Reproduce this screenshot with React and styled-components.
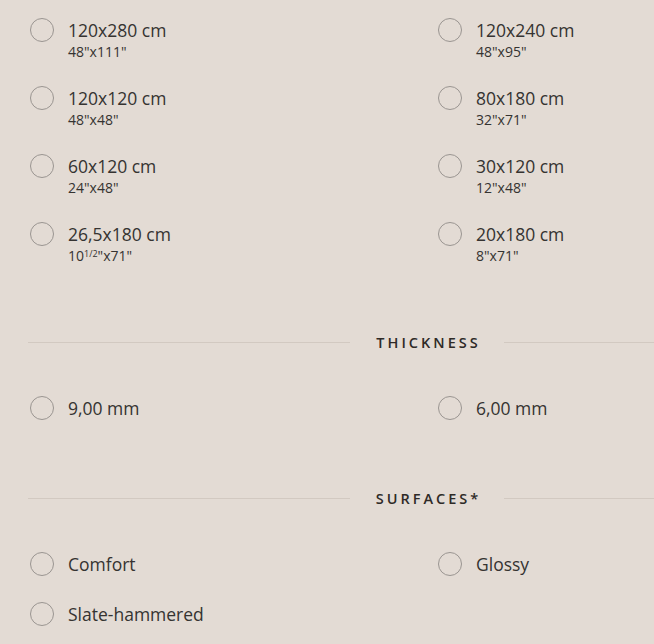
import React from "react";
import styled, { createGlobalStyle } from "styled-components";

const Global = createGlobalStyle`
  html, body { margin: 0; padding: 0; }
  body {
    background: #e3dbd4;
    font-family: "Open Sans", "Noto Sans", sans-serif;
    color: #333;
    overflow: hidden;
  }
`;

const Viewport = styled.div`
  width: 100%;
  overflow: hidden;
`;

const Page = styled.div`
  width: 798px;
  padding: 18px 0 0 28px;
`;

const Grid = styled.div`
  display: grid;
  grid-template-columns: 408px 1fr;
  row-gap: ${(p) => p.$gap}px;
  padding-left: 2px;
`;

const Option = styled.label`
  display: flex;
  align-items: flex-start;
  gap: 14px;
  cursor: pointer;
`;

const Radio = styled.span`
  flex: none;
  width: 24px;
  height: 24px;
  box-sizing: border-box;
  border: 1px solid #9a9591;
  border-radius: 50%;
`;

const Texts = styled.div`
  display: flex;
  flex-direction: column;
`;

const Label = styled.span`
  font-size: 17.5px;
  line-height: 24px;
  color: #353331;
`;

const Sub = styled.span`
  font-size: 14px;
  line-height: 20px;
  color: #353331;
  sup {
    font-size: 9px;
    vertical-align: 4px;
    line-height: 0;
  }
`;

const Header = styled.div`
  display: flex;
  align-items: center;
  gap: 26px;
  height: 20px;
  margin: ${(p) => p.$top}px 0 44px;
  &::before, &::after {
    content: "";
    flex: 1;
    height: 1px;
    background: #d2c9c1;
  }
`;

const HeaderText = styled.span`
  font-size: 14.5px;
  font-weight: 600;
  letter-spacing: 3px;
  margin-right: -3px;
  color: #2e2a27;
`;

const sizes = [
  ["120x280 cm", <>48"x111"</>],
  ["120x240 cm", <>48"x95"</>],
  ["120x120 cm", <>48"x48"</>],
  ["80x180 cm", <>32"x71"</>],
  ["60x120 cm", <>24"x48"</>],
  ["30x120 cm", <>12"x48"</>],
  ["26,5x180 cm", <>10<sup>1/2</sup>"x71"</>],
  ["20x180 cm", <>8"x71"</>],
];

const Item = ({ label, sub }) => (
  <Option>
    <Radio />
    <Texts>
      <Label>{label}</Label>
      {sub && <Sub>{sub}</Sub>}
    </Texts>
  </Option>
);

export default function App() {
  return (
    <Viewport>
      <Global />
      <Page>
        <Grid $gap={24}>
          {sizes.map(([l, s]) => (
            <Item key={l} label={l} sub={s} />
          ))}
        </Grid>
        <Header $top={66}>
          <HeaderText>THICKNESS</HeaderText>
        </Header>
        <Grid $gap={26}>
          <Item label="9,00 mm" />
          <Item label="6,00 mm" />
        </Grid>
        <Header $top={68}>
          <HeaderText>SURFACES*</HeaderText>
        </Header>
        <Grid $gap={26}>
          <Item label="Comfort" />
          <Item label="Glossy" />
          <Item label="Slate-hammered" />
        </Grid>
      </Page>
    </Viewport>
  );
}
